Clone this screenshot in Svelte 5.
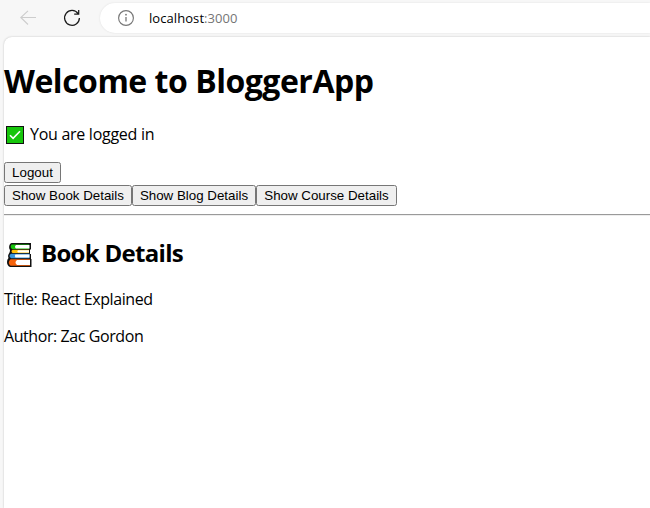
<script>
  let loggedIn = $state(true);
  let view = $state('book');
</script>

<div class="browser">
  <header class="toolbar">
    <svg class="back" width="16" height="16" viewBox="0 0 16 16" fill="none" stroke="#cdcdcd" stroke-width="1.1"><path d="M16 7.5H.8M8 .8.8 7.5 8 14.5" /></svg>
    <svg class="reload" width="18" height="18" viewBox="0 0 18 18" fill="none" stroke="#1b1b1b" stroke-width="1.25"><path d="M15.1 4.7A7.4 7.4 0 1 0 16.4 9M15.7 1v4.2h-4.5" /></svg>
    <div class="address">
      <svg width="18" height="18" viewBox="0 0 18 18"><circle cx="9" cy="9" r="7.4" fill="none" stroke="#777" stroke-width="1.15" /><path d="M9 8v4.4" stroke="#777" stroke-width="1.3" /><circle cx="9" cy="5.7" r=".9" fill="#777" /></svg>
      <span class="url">localhost<span class="port">:3000</span></span>
    </div>
  </header>
  <main>
    <h1>Welcome to BloggerApp</h1>
    {#if loggedIn}
      <p class="status">
        <svg width="18" height="18" viewBox="0 0 18 18"><path fill="#111" d="M0 0h18v18H0z" /><path fill="#16c60c" d="M1 1h16v16H1z" /><path d="m4 9.2 3.1 3.1L14 5.2" fill="none" stroke="#fff" stroke-width="1.6" /></svg>
        <span>You are logged in</span>
      </p>
    {/if}
    <div class="row"><button class="logout" onclick={() => (loggedIn = !loggedIn)}>Logout</button></div>
    <div class="row second">
      <button class="book" onclick={() => (view = 'book')}>Show Book Details</button>
      <button class="blog" onclick={() => (view = 'blog')}>Show Blog Details</button>
      <button class="course" onclick={() => (view = 'course')}>Show Course Details</button>
    </div>
    <hr />
    {#if view === 'book'}
      <section>
        <h2>
          <svg width="25" height="24" viewBox="0 0 25 24">
            <path fill="#111" d="M4.5 0H24v6.5h-1V11h1v5h.5v8H3Q0 22.500 0 19q0-2.500 1.500-4Q.5 12.500 2 10.500 3 9 3 7 1.500 5 2.500 2 3 .5 4.500 0Z" />
            <path fill="#16c60c" d="M4.500 1.500H22v1H9.500v2.500H22v1H5Q2.500 4 4.500 1.500Z" />
            <path fill="#fff" d="M9 2h13.500v3.500H9Q7 3.800 9 2Z" />
            <path fill="#ffc20c" d="M5.500 6.800H22V10H5.500Q3.500 8.500 5.500 6.800Z" />
            <path fill="#fff" d="M11 7.200h11v2.300H11q-1.500-1.200 0-2.300Z" />
            <path fill="#3a96dd" d="M4 10.800h18.500v4.400H4q-3-2.100 0-4.400Z" />
            <path fill="#fff" d="M8.500 11.400h14v3.200h-14q-1.500-1.600 0-3.200Z" />
            <path fill="#f7630c" d="M3.500 16.200H23v6.500H3.500q-3.500-3 0-6.500Z" />
            <path fill="#fff" d="M10 17h13v5H10q-3-2.500 0-5Z" />
          </svg>
          <span>Book Details</span>
        </h2>
        <p class="title">Title: React Explained</p>
        <p class="author">Author: Zac Gordon</p>
      </section>
    {/if}
  </main>
</div>

<style>
  :global(body) { margin: 0; background: #f7f7f7; overflow: hidden; }
  .browser { height: 508px; display: flex; flex-direction: column; font-family: "Open Sans", "Noto Sans", sans-serif; color: #000; }
  .toolbar { height: 37px; flex: none; display: flex; align-items: flex-start; box-sizing: border-box; padding: 3px 0 0 20px; }
  svg { display: block; flex: none; }
  .back { margin-top: 7px; }
  .reload { margin: 6px 0 0 27px; }
  .address { flex: 1; height: 30px; margin-left: 19px; padding-left: 17px; border-radius: 15px 0 0 15px; background: #fff; box-shadow: 0 0 2px #ddd; display: flex; align-items: center; }
  .url { margin-left: 14px; font-size: 13px; line-height: 18px; letter-spacing: .07px; white-space: nowrap; }
  .port { color: #757575; }
  main { flex: 1; margin-left: 4px; background: #fff; border-radius: 8px 0 0 0; box-shadow: 0 0 2px #bbb; white-space: nowrap; }
  h1, h2, p { margin: 0; }
  h1 { padding-top: 22px; font-size: 32px; line-height: 43px; font-weight: 700; letter-spacing: -.49px; }
  p { font-size: 16px; line-height: 21px; letter-spacing: -.42px; }
  .status { display: flex; align-items: center; margin-top: 22px; padding-left: 2px; gap: 6px; letter-spacing: -.28px; }
  .row { display: flex; margin-top: 17px; }
  .row.second { margin-top: 2px; }
  button { box-sizing: border-box; height: 21px; padding: 0; margin: 0; border: 1px solid #767676; border-radius: 2.5px; background: #efefef; color: #000; font: 13.333px/17px "Liberation Sans", Arial, sans-serif; }
  .logout { width: 57px; }
  .book { width: 128px; }
  .blog { width: 124px; }
  .course { width: 141px; }
  hr { height: 0; margin: 8px 0 0; border: 0; border-top: 1px solid #9a9a9a; border-bottom: 1px solid #eee; }
  h2 { margin-top: 21px; padding-left: 3px; display: flex; align-items: center; gap: 9px; font-size: 24px; line-height: 32px; letter-spacing: -.7px; }
  h2 svg { margin-top: 3px; }
  .title { margin-top: 20px; }
  .author { margin-top: 16px; }
</style>
